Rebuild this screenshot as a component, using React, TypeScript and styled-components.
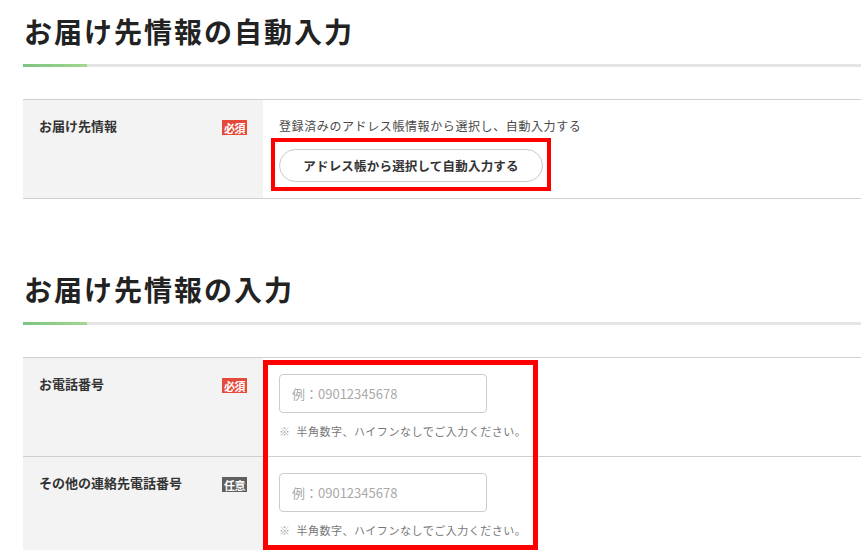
import React from "react";
import styled, { createGlobalStyle } from "styled-components";

const Global = createGlobalStyle`
  html, body { margin: 0; padding: 0; background: #fff; }
  body { font-family: "Noto Sans CJK JP", "Noto Sans", sans-serif; color: #333; overflow: hidden; }
  * { box-sizing: border-box; }
`;

const Page = styled.div`
  padding: 11px 0 0 23px;
  width: 861px;
`;

const Section = styled.section<{ $gap?: number }>`
  margin-top: ${(p) => p.$gap ?? 0}px;
`;

const Heading = styled.h2`
  margin: 0;
  font-size: 28px;
  line-height: 40px;
  font-weight: 700;
  letter-spacing: 2px;
  color: #222;
  padding: 0 0 13px 1px;
  position: relative;
  border-bottom: 3px solid #e4e4e4;
  &::after {
    content: "";
    position: absolute;
    left: 0;
    bottom: -3px;
    width: 64px;
    height: 3px;
    background: linear-gradient(90deg, #7cc382, #a3d78f);
  }
`;

const Table = styled.div`
  margin-top: 32px;
  border-top: 1px solid #cfcfcf;
  position: relative;
`;

const Row = styled.div`
  display: grid;
  grid-template-columns: 240px 1fr;
  border-bottom: 1px solid #cfcfcf;
`;

const HeadCell = styled.div`
  background: #f3f3f3;
  padding: 16px;
  display: flex;
  justify-content: space-between;
  align-items: flex-start;
`;

const Label = styled.div`
  font-size: 13px;
  line-height: 20px;
  font-weight: 700;
  color: #333;
`;

const Badge = styled.span<{ $optional?: boolean }>`
  margin-top: 4px;
  width: 25px;
  height: 15px;
  display: inline-flex;
  align-items: center;
  justify-content: center;
  font-size: 11px;
  letter-spacing: -0.5px;
  font-weight: 700;
  color: #fff;
  background: ${(p) => (p.$optional ? "#5f5f5f" : "#e5493a")};
`;

const BodyCell = styled.div`
  padding: 16px;
  display: flex;
  flex-direction: column;
  align-items: flex-start;
`;

const Desc = styled.p`
  margin: 0;
  font-size: 12px;
  line-height: 20px;
  letter-spacing: 0.6px;
  color: #4a4a4a;
`;

const Highlight = styled.div`
  position: relative;
  margin-top: 13px;
  &::after {
    content: "";
    position: absolute;
    left: -8px;
    right: -8px;
    top: -11px;
    bottom: -9px;
    border: 4px solid #ff0000;
    pointer-events: none;
  }
`;

const PillButton = styled.button`
  width: 264px;
  height: 33px;
  border: 1px solid #c9c9c9;
  border-radius: 17px;
  background: #fff;
  font-family: inherit;
  font-size: 12.5px;
  letter-spacing: 0.2px;
  font-weight: 700;
  color: #333;
  display: flex;
  align-items: center;
  justify-content: center;
  padding: 0;
`;

const Input = styled.input`
  width: 208px;
  height: 39px;
  border: 1px solid #cccccc;
  border-radius: 4px;
  padding: 0 12px;
  font-family: "Noto Sans CJK JP", "Noto Sans", sans-serif;
  font-size: 13px;
  color: #333;
  outline: none;
  &::placeholder { color: #aaaaaa; }
`;

const Note = styled.p`
  margin: 9px 0 0;
  font-size: 11px;
  line-height: 18px;
  letter-spacing: 0.5px;
  color: #777;
`;

const NoteMark = styled.span`
  color: #aaa;
  margin-right: 6px;
`;

const Frame = styled.div`
  position: absolute;
  left: 240px;
  top: 2px;
  width: 275px;
  height: 190px;
  border: 5px solid #ff0000;
  pointer-events: none;
`;

const PhoneRow: React.FC<{ label: string; optional?: boolean }> = ({ label, optional }) => (
  <Row>
    <HeadCell>
      <Label>{label}</Label>
      <Badge $optional={optional}>{optional ? "任意" : "必須"}</Badge>
    </HeadCell>
    <BodyCell>
      <Input placeholder="例：09012345678" />
      <Note>
        <NoteMark>※</NoteMark>半角数字、ハイフンなしでご入力ください。
      </Note>
    </BodyCell>
  </Row>
);

export default function App() {
  return (
    <>
      <Global />
      <Page>
        <Section>
          <Heading>お届け先情報の自動入力</Heading>
          <Table>
            <Row>
              <HeadCell>
                <Label>お届け先情報</Label>
                <Badge>必須</Badge>
              </HeadCell>
              <BodyCell>
                <Desc>登録済みのアドレス帳情報から選択し、自動入力する</Desc>
                <Highlight>
                  <PillButton>アドレス帳から選択して自動入力する</PillButton>
                </Highlight>
              </BodyCell>
            </Row>
          </Table>
        </Section>
        <Section $gap={70}>
          <Heading>お届け先情報の入力</Heading>
          <Table>
            <PhoneRow label="お電話番号" />
            <PhoneRow label="その他の連絡先電話番号" optional />
            <Frame />
          </Table>
        </Section>
      </Page>
    </>
  );
}
